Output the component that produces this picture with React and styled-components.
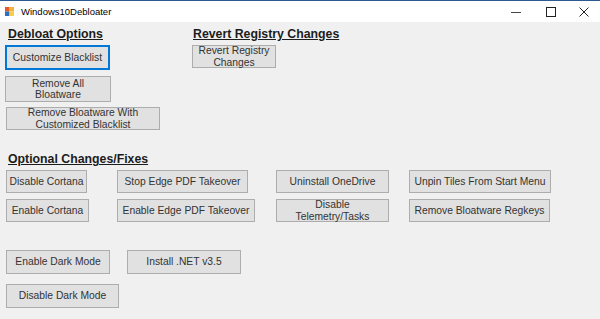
import styled, { createGlobalStyle } from "styled-components";

const Global = createGlobalStyle`
  html, body { margin: 0; padding: 0; }
  body {
    width: 600px;
    height: 319px;
    overflow: hidden;
    background: #f0f0f0;
    font-family: "Liberation Sans", Arial, sans-serif;
  }
`

const Window = styled.div`
  width: 600px;
  height: 319px;
  background: #f0f0f0;
  display: flex;
  flex-direction: column;
`
const TitleBar = styled.div`
  height: 21px;
  background: #ffffff;
  border-top: 1px solid #2b5b92;
  display: flex;
  align-items: center;
  flex-shrink: 0;
`
const AppIcon = styled.svg`
  width: 9px;
  height: 9px;
  margin-left: 5px;
  margin-right: 7px;
`
const Title = styled.span`
  font-size: 9.5px;
  color: #000;
  flex: 1;
`
const Controls = styled.div`
  display: flex;
  height: 100%;
`
const ControlBox = styled.div`
  width: ${p => p.$w}px;
  height: 100%;
  display: flex;
  align-items: center;
  justify-content: center;
`
const Body = styled.div`
  flex: 1;
  display: flex;
  flex-direction: column;
`
const TopSection = styled.div`
  display: flex;
  padding-top: 4px;
  padding-left: 5px;
`
const Column = styled.div`
  width: ${p => (p.$w ? `${p.$w}px` : "auto")};
  display: flex;
  flex-direction: column;
  align-items: flex-start;
`
const Heading = styled.div`
  font-size: 12.3px;
  font-weight: bold;
  line-height: 17px;
  height: 17px;
  text-decoration: underline;
  text-underline-offset: 1px;
  color: #1c1c1c;
  padding-left: ${p => p.$pad || 0}px;
  margin-bottom: 2px;
  white-space: nowrap;
`
const WinButton = styled.button`
  width: ${p => p.$w}px;
  height: ${p => p.$h || 23}px;
  margin: ${p => p.$m || "0"};
  padding: 0 2px;
  box-sizing: border-box;
  background: #e1e1e1;
  border: ${p => (p.$focused ? "2px solid #0078d7" : "1px solid #adadad")};
  border-radius: 0;
  font-family: "Liberation Sans", Arial, sans-serif;
  font-size: 10.3px;
  line-height: 11.5px;
  color: #333;
  text-align: center;
  display: flex;
  align-items: center;
  justify-content: center;
  flex-shrink: 0;
`
const OptionalSection = styled.div`
  margin-top: 21px;
  padding-left: 5px;
`
const ButtonGrid = styled.div`
  display: grid;
  grid-template-columns: 111px 159px 133px auto;
  grid-auto-rows: 23px;
  row-gap: 6px;
  padding-left: 1px;
`
const ExtraSection = styled.div`
  margin-top: 28px;
  padding-left: 6px;
  display: flex;
  flex-direction: column;
  gap: 10px;
`
const ExtraRow = styled.div`
  display: flex;
  gap: 17px;
`

const grid = [
  ["Disable Cortana", 81],
  ["Stop Edge PDF Takeover", 131],
  ["Uninstall OneDrive", 113],
  ["Unpin Tiles From Start Menu", 142],
  ["Enable Cortana", 83],
  ["Enable Edge PDF Takeover", 138],
  ["Disable Telemetry/Tasks", 113],
  ["Remove Bloatware Regkeys", 141],
]

function App() {
  return (
    <>
      <Global />
      <Window>
        <TitleBar>
          <AppIcon viewBox="0 0 9 9">
            <rect x="0" y="0" width="4.5" height="4.5" fill="#e8562a" />
            <rect x="4.5" y="0" width="4.5" height="4.5" fill="#f3b33d" />
            <rect x="0" y="4.5" width="4.5" height="4.5" fill="#2f6fc2" />
            <rect x="4.5" y="4.5" width="4.5" height="4.5" fill="#f5d04a" />
          </AppIcon>
          <Title>Windows10Debloater</Title>
          <Controls>
            <ControlBox $w={35}>
              <svg width="10" height="10" viewBox="0 0 10 10">
                <line x1="0" y1="5.5" x2="10" y2="5.5" stroke="#444" strokeWidth="1" />
              </svg>
            </ControlBox>
            <ControlBox $w={35}>
              <svg width="10" height="10" viewBox="0 0 10 10">
                <rect x="0.5" y="0.5" width="9" height="9" fill="none" stroke="#222" strokeWidth="1" />
              </svg>
            </ControlBox>
            <ControlBox $w={32}>
              <svg width="10" height="10" viewBox="0 0 10 10">
                <path d="M0.5 0.5 L9.5 9.5 M9.5 0.5 L0.5 9.5" stroke="#222" strokeWidth="1" />
              </svg>
            </ControlBox>
          </Controls>
        </TitleBar>
        <Body>
          <TopSection>
            <Column $w={187}>
              <Heading $pad={3}>Debloat Options</Heading>
              <WinButton $w={105} $h={25} $focused>Customize Blacklist</WinButton>
              <WinButton $w={106} $h={26} $m="6px 0 0 0">Remove All<br />Bloatware</WinButton>
              <WinButton $w={154} $h={23} $m="5px 0 0 1px">Remove Bloatware With<br />Customized Blacklist</WinButton>
            </Column>
            <Column>
              <Heading $pad={1}>Revert Registry Changes</Heading>
              <WinButton $w={84} $h={23}>Revert Registry<br />Changes</WinButton>
            </Column>
          </TopSection>
          <OptionalSection>
            <Heading $pad={3}>Optional Changes/Fixes</Heading>
            <ButtonGrid>
              {grid.map(([label, w]) => (
                <WinButton key={label} $w={w}>
                  {label === "Disable Telemetry/Tasks" ? <>Disable<br />Telemetry/Tasks</> : label}
                </WinButton>
              ))}
            </ButtonGrid>
          </OptionalSection>
          <ExtraSection>
            <ExtraRow>
              <WinButton $w={104} $h={24}>Enable Dark Mode</WinButton>
              <WinButton $w={114} $h={24}>Install .NET v3.5</WinButton>
            </ExtraRow>
            <ExtraRow>
              <WinButton $w={113} $h={24}>Disable Dark Mode</WinButton>
            </ExtraRow>
          </ExtraSection>
        </Body>
      </Window>
    </>
  )
}

export default App;
